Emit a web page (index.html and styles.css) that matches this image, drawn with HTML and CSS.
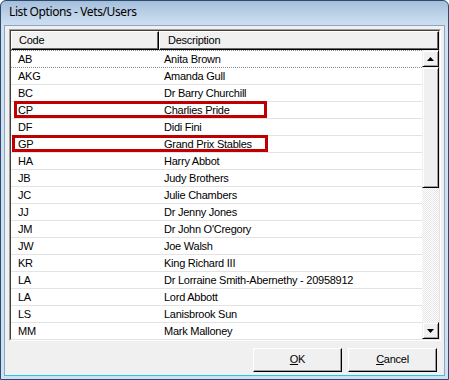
FILE: index.html
```html
<!DOCTYPE html>
<html>
<head>
<meta charset="utf-8">
<link rel="stylesheet" href="styles.css">
</head>
<body>
<div class="window">
  <div class="titlebar">List Options - Vets/Users</div>
  <div class="client">
    <div class="listbox">
      <div class="header">
        <div class="hcell code">Code</div>
        <div class="hcell desc">Description</div>
      </div>
      <div class="body">
        <div class="rows">
          <div class="row focus"><span class="c1">AB</span><span class="c2">Anita Brown</span></div>
          <div class="row"><span class="c1">AKG</span><span class="c2">Amanda Gull</span></div>
          <div class="row"><span class="c1">BC</span><span class="c2">Dr Barry Churchill</span></div>
          <div class="row"><span class="c1">CP</span><span class="c2">Charlies Pride</span><span class="mark m1"></span></div>
          <div class="row"><span class="c1">DF</span><span class="c2">Didi Fini</span></div>
          <div class="row"><span class="c1">GP</span><span class="c2">Grand Prix Stables</span><span class="mark m2"></span></div>
          <div class="row"><span class="c1">HA</span><span class="c2">Harry Abbot</span></div>
          <div class="row"><span class="c1">JB</span><span class="c2">Judy Brothers</span></div>
          <div class="row"><span class="c1">JC</span><span class="c2">Julie Chambers</span></div>
          <div class="row"><span class="c1">JJ</span><span class="c2">Dr Jenny Jones</span></div>
          <div class="row"><span class="c1">JM</span><span class="c2">Dr John O'Cregory</span></div>
          <div class="row"><span class="c1">JW</span><span class="c2">Joe Walsh</span></div>
          <div class="row"><span class="c1">KR</span><span class="c2">King Richard III</span></div>
          <div class="row"><span class="c1">LA</span><span class="c2">Dr Lorraine Smith-Abernethy - 20958912</span></div>
          <div class="row"><span class="c1">LA</span><span class="c2">Lord Abbott</span></div>
          <div class="row"><span class="c1">LS</span><span class="c2">Lanisbrook Sun</span></div>
          <div class="row"><span class="c1">MM</span><span class="c2">Mark Malloney</span></div>
        </div>
        <div class="scrollbar">
          <div class="sbtn"><svg width="7" height="4" viewBox="0 0 7 4"><path d="M3.5 0 L7 4 L0 4 Z" fill="#000"/></svg></div>
          <div class="thumb"></div>
          <div class="track"></div>
          <div class="sbtn"><svg width="7" height="4" viewBox="0 0 7 4"><path d="M0 0 L7 0 L3.5 4 Z" fill="#000"/></svg></div>
        </div>
      </div>
    </div>
    <div class="buttons">
      <div class="btn"><span class="ul">O</span>K</div>
      <div class="btn"><span class="ul">C</span>ancel</div>
    </div>
  </div>
</div>
</body>
</html>
```

FILE: styles.css
```css
html, body {
  margin: 0;
  padding: 0;
  background: #fff;
}
.window {
  width: 449px;
  height: 380px;
  box-sizing: border-box;
  border: 1px solid #2b4a6e;
  border-radius: 6px 6px 0 0;
  background: linear-gradient(#a4bedb 0px, #c2d6eb 16px, #cfe0f1 26px);
  display: flex;
  flex-direction: column;
  padding: 0 3px 3px 3px;
  overflow: hidden;
}
.titlebar {
  height: 24px;
  flex: none;
  font-family: "Noto Sans", "DejaVu Sans", sans-serif;
  font-size: 12px;
  letter-spacing: -0.4px;
  line-height: 22px;
  padding-left: 5px;
  color: #000;
}
.client {
  flex: 1;
  background: #f0f0f0;
  border: 1px solid #8aa6c4;
  border-bottom-color: #2fc3e6;
  display: flex;
  flex-direction: column;
  padding: 3px 3px 0 4px;
  font-family: "Liberation Sans", Arial, sans-serif;
  font-size: 11px;
  letter-spacing: -0.25px;
  color: #000;
}
.listbox {
  width: 432px;
  height: 312px;
  box-sizing: border-box;
  border: 1px solid;
  border-color: #a0a0a0 #fff #fff #a0a0a0;
  background: #fff;
  display: flex;
  flex-direction: column;
  position: relative;
}
.listbox::before {
  content: "";
  position: absolute;
  inset: 0;
  border: 1px solid;
  border-color: #404040 #e3e3e3 #e3e3e3 #404040;
  pointer-events: none;
}
.header {
  height: 19px;
  flex: none;
  display: flex;
  margin: 1px 1px 0 1px;
}
.hcell {
  box-sizing: border-box;
  height: 19px;
  background: #f0f0f0;
  border: 1px solid;
  border-color: #fff #000 #000 #fff;
  box-shadow: inset -1px -1px 0 #696969;
  line-height: 16px;
  padding-left: 7px;
}
.code { width: 148px; flex: none; }
.desc { flex: 1; padding-left: 8px; }
.body {
  flex: 1;
  display: flex;
  margin: 0 1px 1px 1px;
  min-height: 0;
}
.rows {
  flex: 1;
  padding-top: 1px;
}
.row {
  height: 17px;
  box-sizing: border-box;
  border-bottom: 1px solid #e3e3e3;
  display: flex;
  align-items: center;
  position: relative;
  line-height: 16px;
}
.row.focus {
  border-top: 1px dotted #8c8c8c;
  border-bottom: 1px dotted #8c8c8c;
  margin-top: -1px;
  height: 18px;
}
.c1 { width: 153px; padding-left: 7px; box-sizing: border-box; flex: none; }
.c2 { padding-left: 0; }
.mark {
  position: absolute;
  top: -1px;
  height: 17px;
  box-sizing: border-box;
  border: 3px solid #c00000;
}
.m1 { left: 3px; width: 253px; }
.m2 { left: 1px; width: 256px; }
.scrollbar {
  width: 17px;
  flex: none;
  display: flex;
  flex-direction: column;
  background-color: #f4f4f4;
  background-image: repeating-conic-gradient(#ffffff 0 25%, #e6e6e6 0 50%);
  background-size: 2px 2px;
}
.sbtn, .thumb {
  box-sizing: border-box;
  background: #f0f0f0;
  border: 1px solid;
  border-color: #f0f0f0 #000 #000 #f0f0f0;
  box-shadow: inset 1px 1px 0 #fff, inset -1px -1px 0 #a0a0a0;
}
.sbtn {
  height: 17px;
  display: flex;
  align-items: center;
  justify-content: center;
}
.thumb { height: 121px; }
.track { flex: 1; }
.buttons {
  display: flex;
  justify-content: flex-end;
  gap: 6px;
  margin-top: 7px;
  padding-right: 4px;
}
.btn {
  width: 89px;
  height: 24px;
  box-sizing: border-box;
  background: #f0f0f0;
  border: 1px solid;
  border-color: #fff #000 #000 #fff;
  box-shadow: inset -1px -1px 0 #a0a0a0;
  text-align: center;
  line-height: 21px;
}
.ul { text-decoration: underline; }
```
